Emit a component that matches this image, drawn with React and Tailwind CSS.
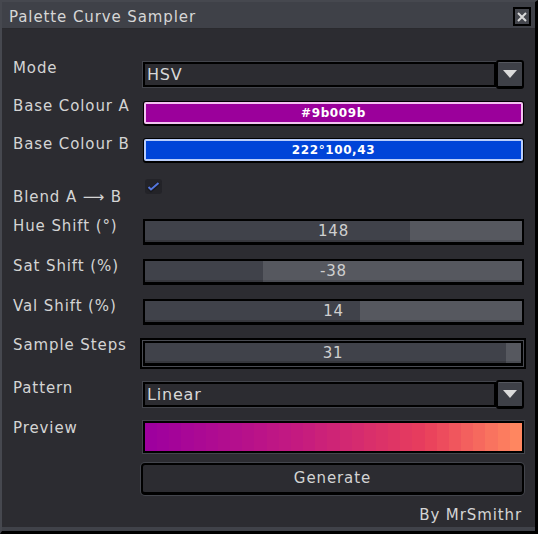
import React from "react";

const font = "font-['DejaVu_Sans',sans-serif]";

function Label({ children, className = "" }) {
  return (
    <div className={`w-[130px] shrink-0 text-[15px] leading-[15px] tracking-[0.9px] text-[#d4d4d4] ${className}`}>
      {children}
    </div>
  );
}

function Triangle() {
  return (
    <svg width="14" height="8" viewBox="0 0 14 8">
      <polygon points="0,0 14,0 7,8" fill="#dcdcdc" />
    </svg>
  );
}

function Dropdown({ value }) {
  return (
    <div className="flex flex-1 items-center h-[29px]">
      <div className="flex-1 h-[25px] border-2 border-black bg-[#2c2c31] shadow-[0_0_0_1px_#43454c] flex items-center pl-[2px] text-[16px] tracking-[0.8px] text-[#d8d8d8]">
        {value}
      </div>
      <div className="w-[28px] h-[29px] border-2 border-black bg-[#3e4047] rounded-[3px] border-b-[3px] flex items-center justify-center shadow-[inset_0_1px_0_#55575e]">
        <Triangle />
      </div>
    </div>
  );
}

function ColourField({ bg, edge, text }) {
  return (
    <div className="flex-1 h-[25px] bg-black rounded-[3px] p-[1px] pb-[2px]">
      <div
        className={`h-full w-full rounded-[2px] border-2 flex items-center justify-center text-[12px] font-bold tracking-[0.6px] text-white ${bg} ${edge}`}
      >
        {text}
      </div>
    </div>
  );
}

function Slider({ value, pct, focused }) {
  const bar = (
    <div className="relative h-full w-full border-2 border-b-[3px] border-black flex">
      <div className="h-full bg-[#40424a] border-b-2 border-[#36373d]" style={{ width: pct + "%" }} />
      <div className="h-full flex-1 bg-[#56585f] border-b-2 border-[#4a4c53]" />
      <span className="absolute inset-0 flex items-center justify-center text-[15px] tracking-[0.8px] text-[#cfcfcf]">
        {value}
      </span>
    </div>
  );
  if (focused) {
    return (
      <div className="flex-1 h-[31px] ml-[-3px] mr-[-2px] border-2 border-black bg-[#4a4c53] p-[1px]">
        {bar}
      </div>
    );
  }
  return <div className="flex-1 h-[26px]">{bar}</div>;
}

function Check() {
  return (
    <svg width="17" height="15" viewBox="0 0 17 15">
      <rect x="0" y="0" width="17" height="15" rx="3" fill="#232328" />
      <path d="M3 8 L6 11 L14 4" stroke="#1a1a1e" strokeWidth="4" fill="none" />
      <path d="M3.5 8 L6 10.5 L13.5 4" stroke="#5476dc" strokeWidth="2" fill="none" />
    </svg>
  );
}

function lerp(a, b, t) {
  return a + (b - a) * t;
}

const stops = [
  [0, [158, 0, 158]],
  [0.4, [196, 26, 128]],
  [0.75, [232, 62, 92]],
  [1, [255, 134, 96]],
];

function colourAt(t) {
  for (let i = 0; i < stops.length - 1; i++) {
    const [t0, c0] = stops[i];
    const [t1, c1] = stops[i + 1];
    if (t >= t0 && t <= t1) {
      const u = (t - t0) / (t1 - t0);
      return `rgb(${Math.round(lerp(c0[0], c1[0], u))},${Math.round(lerp(c0[1], c1[1], u))},${Math.round(
        lerp(c0[2], c1[2], u)
      )})`;
    }
  }
  return "rgb(255,134,96)";
}

function Preview() {
  const n = 31;
  const bands = Array.from({ length: n }, (_, i) => colourAt(i / (n - 1)));
  return (
    <div className="flex-1 h-[32px] border-2 border-black shadow-[0_0_0_1px_#43454c] flex">
      {bands.map((c, i) => (
        <div key={i} className="flex-1 h-full" style={{ background: c }} />
      ))}
    </div>
  );
}

export default function App() {
  return (
    <div
      className={`${font} w-[538px] h-[534px] flex flex-col bg-[#2c2c31] border-l-2 border-t-2 border-[#46484f] border-r-[3px] border-r-black border-b-[3px] border-b-black`}
    >
      <div className="h-[27px] shrink-0 bg-[#3f4148] flex items-start justify-between pl-[7px] pr-[4px] border-b border-[#2a2a2e]">
        <span className="text-[15px] tracking-[0.9px] text-[#d6d6d6] mt-[4px]">Palette Curve Sampler</span>
        <div className="w-[18px] h-[19px] border-2 border-black bg-[#45474e] flex items-center justify-center mt-[5px]">
          <svg width="10" height="10" viewBox="0 0 10 10">
            <path d="M1 1 L9 9 M9 1 L1 9" stroke="#dadada" strokeWidth="2" />
          </svg>
        </div>
      </div>

      <div className="flex-1 flex flex-col pl-[11px] pr-[11px] border-b-[4px] border-[#404249]">
        <div className="flex mt-[31px] h-[29px]">
          <Label className="pt-[1px]">Mode</Label>
          <Dropdown value="HSV" />
        </div>

        <div className="flex mt-[12px] h-[25px]">
          <Label className="mt-[-2px]">Base Colour A</Label>
          <ColourField bg="bg-[#9b009b]" edge="border-[#f2c2f0]" text="#9b009b" />
        </div>

        <div className="flex mt-[12px] h-[25px]">
          <Label className="mt-[-1px]">Base Colour B</Label>
          <ColourField bg="bg-[#0044d8]" edge="border-[#b9cdfb]" text="222°100,43" />
        </div>

        <div className="flex mt-[16px] h-[26px]">
          <Label className="mt-[11px]">Blend A ⟶ B</Label>
          <div className="ml-[2px]">
            <Check />
          </div>
        </div>

        <div className="flex mt-[14px] h-[26px]">
          <Label>Hue Shift (°)</Label>
          <Slider value="148" pct={70.3} />
        </div>

        <div className="flex mt-[14px] h-[26px]">
          <Label>Sat Shift (%)</Label>
          <Slider value="-38" pct={31.3} />
        </div>

        <div className="flex mt-[14px] h-[26px]">
          <Label>Val Shift (%)</Label>
          <Slider value="14" pct={57} />
        </div>

        <div className="flex mt-[13px] h-[31px]">
          <Label>Sample Steps</Label>
          <Slider value="31" pct={96} focused />
        </div>

        <div className="flex mt-[11px] h-[29px]">
          <Label className="pt-[1px]">Pattern</Label>
          <Dropdown value="Linear" />
        </div>

        <div className="flex mt-[12px] h-[32px]">
          <Label>Preview</Label>
          <Preview />
        </div>

        <div className="flex mt-[10px] h-[32px]">
          <div className="w-[128px] shrink-0" />
          <div className="w-[384px] h-[32px] border-2 border-black border-b-[3px] rounded-[4px] bg-[#2c2c31] shadow-[0_0_0_1px_#43454c] flex items-center justify-center text-[15px] tracking-[0.9px] text-[#d4d4d4]">
            Generate
          </div>
        </div>

        <div className="flex justify-end mt-[9px] pr-[2px] text-[15px] tracking-[0.9px] text-[#d4d4d4]">By MrSmithr</div>
      </div>
    </div>
  );
}
